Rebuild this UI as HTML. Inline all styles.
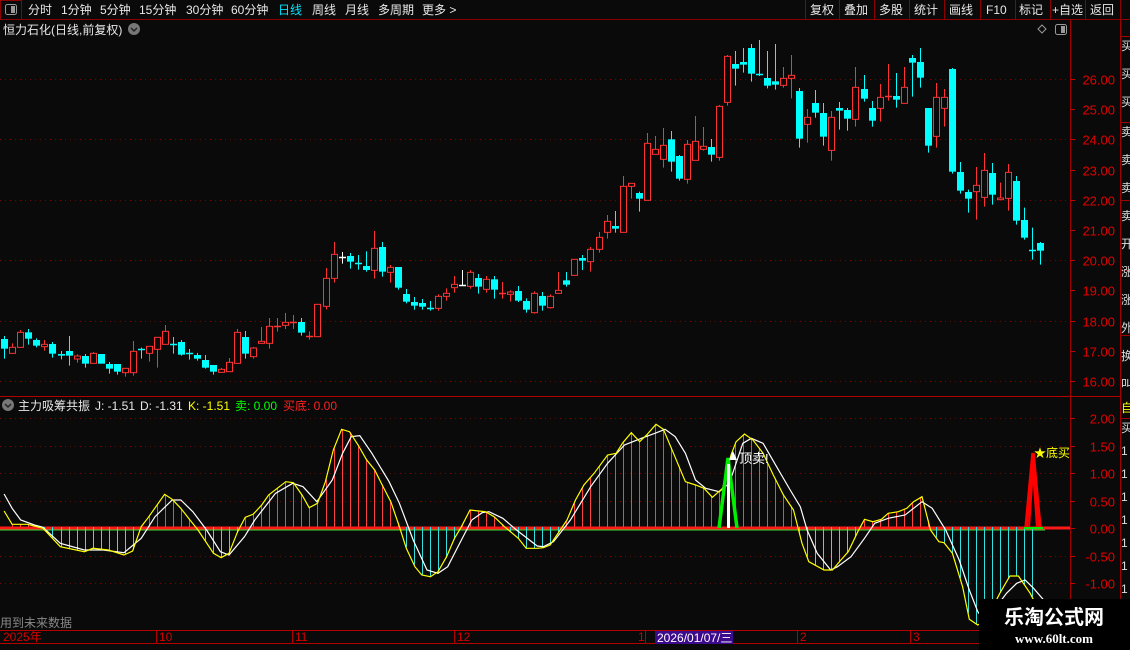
<!DOCTYPE html>
<html><head><meta charset="utf-8"><style>
*{margin:0;padding:0}
body{width:1130px;height:650px;background:#0a0a0a;overflow:hidden;position:relative;font-family:"Liberation Sans","Noto Sans CJK SC",sans-serif;color:#ddd}
</style></head><body>
<svg id="s" width="1130" height="650" style="position:absolute;left:0;top:0" xmlns="http://www.w3.org/2000/svg" font-family="Liberation Sans, Noto Sans CJK SC, sans-serif">
<rect x="0" y="0" width="1130" height="19" fill="#0a0a0a"/>
<line x1="0" y1="19.5" x2="1130" y2="19.5" stroke="#8b0000"/>
<rect x="0.5" y="0.5" width="21" height="19" fill="none" stroke="#8b0000"/>
<rect x="5.5" y="4.5" width="11" height="10" rx="2" fill="none" stroke="#999"/>
<rect x="11" y="6" width="4" height="7" fill="#999"/>
<g stroke="#8b0000">
<line x1="805.5" y1="0" x2="805.5" y2="19"/><line x1="839.5" y1="0" x2="839.5" y2="19"/><line x1="874.5" y1="0" x2="874.5" y2="19"/><line x1="909.5" y1="0" x2="909.5" y2="19"/><line x1="944.5" y1="0" x2="944.5" y2="19"/><line x1="980.5" y1="0" x2="980.5" y2="19"/><line x1="1015.5" y1="0" x2="1015.5" y2="19"/><line x1="1050.5" y1="0" x2="1050.5" y2="19"/><line x1="1085.5" y1="0" x2="1085.5" y2="19"/><line x1="1120.5" y1="0" x2="1120.5" y2="19"/>
</g>
<g font-size="12" fill="#e8e8e8">
<text x="28" y="14">分时</text><text x="61" y="14">1分钟</text><text x="100" y="14">5分钟</text><text x="139" y="14">15分钟</text><text x="186" y="14">30分钟</text><text x="231" y="14">60分钟</text><text x="278" y="14" fill="#00e5ff">日线</text><text x="312" y="14">周线</text><text x="345" y="14">月线</text><text x="378" y="14">多周期</text><text x="422" y="14">更多 &gt;</text>
<text x="810" y="14">复权</text><text x="844" y="14">叠加</text><text x="879" y="14">多股</text><text x="914" y="14">统计</text><text x="949" y="14">画线</text><text x="986" y="14">F10</text><text x="1019" y="14">标记</text><text x="1052" y="14">+自选</text><text x="1090" y="14">返回</text>
</g>
<line x1="1070.5" y1="20" x2="1070.5" y2="630" stroke="#a00000"/>
<line x1="1120.5" y1="20" x2="1120.5" y2="630" stroke="#a00000"/>
<line x1="0" y1="396.5" x2="1120" y2="396.5" stroke="#b00000"/>
<line x1="0" y1="630.5" x2="980" y2="630.5" stroke="#b00000"/>
<line x1="0" y1="643.5" x2="980" y2="643.5" stroke="#b00000"/>
<text x="3" y="34" font-size="12" fill="#e8e8e8">恒力石化(日线,前复权)</text>
<circle cx="134" cy="29" r="6" fill="#777"/><path d="M131 28l3 3 3-3" stroke="#222" stroke-width="1.5" fill="none"/>
<path d="M1042 25l4 4-4 4-4-4z" fill="none" stroke="#999"/>
<rect x="1055.5" y="24.5" width="11" height="10" rx="2" fill="none" stroke="#999"/><rect x="1061" y="26" width="4" height="7" fill="#999"/>
<g id="grid" stroke="#7a0000" stroke-dasharray="1 4"></g>
<g id="axis" font-size="13" fill="#e00000" text-anchor="end"></g>
<g id="cand"></g>
<g id="ind"></g>
<circle cx="8" cy="405" r="6" fill="#777"/><path d="M5 404l3 3 3-3" stroke="#222" stroke-width="1.5" fill="none"/>
<g font-size="12">
<text x="18" y="410" fill="#e8e8e8">主力吸筹共振</text>
<text x="95" y="410" fill="#e8e8e8">J: -1.51</text>
<text x="140" y="410" fill="#e8e8e8">D: -1.31</text>
<text x="188" y="410" fill="#ffff00">K: -1.51</text>
<text x="235" y="410" fill="#00ff00">卖: 0.00</text>
<text x="283" y="410" fill="#ff2020">买底: 0.00</text>
</g>
<polyline points="719,528 728,458 737,528" fill="none" stroke="#00ee00" stroke-width="3.5"/>
<rect x="727" y="464" width="3" height="64" fill="#fff"/>
<path d="M733 451l4 9h-8z" fill="#fff"/>
<text x="739" y="463" font-size="13" fill="#fff">顶卖!</text>
<polyline points="1026,528 1033,453 1040,528" fill="none" stroke="#ff0000" stroke-width="3.5"/>
<polyline points="1029,528 1033,470 1037,528" fill="none" stroke="#ff0000" stroke-width="2"/>
<line x1="1024" y1="528" x2="1043" y2="528" stroke="#00ee00" stroke-width="2"/>
<text x="1034" y="457" font-size="12" fill="#ffff00">★底买</text>
<g font-size="12" fill="#d00000">
<text x="3" y="641">2025年</text><text x="159" y="641">10</text><text x="295" y="641">11</text><text x="457" y="641">12</text><text x="638" y="641">1</text><text x="800" y="641">2</text><text x="913" y="641">3</text>
</g>
<g stroke="#b00000"><line x1="156.5" y1="631" x2="156.5" y2="643"/><line x1="292.5" y1="631" x2="292.5" y2="643"/><line x1="454.5" y1="631" x2="454.5" y2="643"/><line x1="645.5" y1="631" x2="645.5" y2="643"/><line x1="797.5" y1="631" x2="797.5" y2="643"/><line x1="910.5" y1="631" x2="910.5" y2="643"/></g>
<rect x="655" y="631" width="78" height="13" fill="#3c0a8c"/>
<text x="657" y="642" font-size="12" fill="#fff">2026/01/07/三</text>
<text x="0" y="627" font-size="12" fill="#888">用到未来数据</text>
<rect x="979" y="599" width="151" height="51" fill="#000"/>
<text x="1054" y="624" font-size="20" font-weight="bold" fill="#fff" text-anchor="middle">乐淘公式网</text>
<text x="1054" y="643" font-size="13" font-weight="bold" fill="#fff" text-anchor="middle" font-family="Liberation Serif, serif">www.60lt.com</text>
<g stroke="#a00000" fill="none"><line x1="1120" y1="36.5" x2="1130" y2="36.5"/><line x1="1120" y1="122.5" x2="1130" y2="122.5"/><line x1="1120" y1="200.5" x2="1130" y2="200.5"/><line x1="1120" y1="270.5" x2="1130" y2="270.5"/><line x1="1120" y1="335.5" x2="1130" y2="335.5"/><line x1="1120" y1="418.5" x2="1130" y2="418.5"/></g>
<g font-size="12" fill="#ddd"><text x="1121" y="50">买</text><text x="1121" y="78">买</text><text x="1121" y="106">买</text><text x="1121" y="136">卖</text><text x="1121" y="164">卖</text><text x="1121" y="192">卖</text><text x="1121" y="220">卖</text><text x="1121" y="248">开</text><text x="1121" y="276">涨</text><text x="1121" y="304">涨</text><text x="1121" y="332">外</text><text x="1121" y="360">换</text><text x="1121" y="388">叫</text>
<text x="1121" y="412" fill="#ffff00">自</text><text x="1121" y="432">买</text><text x="1121" y="455">1</text><text x="1121" y="478">1</text><text x="1121" y="501">1</text><text x="1121" y="524">1</text><text x="1121" y="547">1</text><text x="1121" y="570">1</text><text x="1121" y="593">1</text></g>
</svg>
<script>
var NS="http://www.w3.org/2000/svg";
function el(p,t,a){var e=document.createElementNS(NS,t);for(var k in a)e.setAttribute(k,a[k]);document.getElementById(p).appendChild(e);return e;}
var py=function(p){return 79+(26-p)*30.2;};
for(var p=16;p<=26;p++){var y=Math.round(py(p))+0.5;
 if(p%2==0)el("grid","line",{x1:0,y1:y,x2:1070,y2:y});
 el("axis","line",{x1:1070,y1:y,x2:1075,y2:y,stroke:"#c00000"});
 var t=el("axis","text",{x:1115,y:y+5});t.textContent=p.toFixed(2);}
var iy=function(v){return 528-v*55;};
[2,1.5,1,0.5,0,-0.5,-1].forEach(function(v){var y=Math.round(iy(v))+0.5;
 if(v!=0)el("grid","line",{x1:0,y1:y,x2:1070,y2:y});
 el("axis","line",{x1:1070,y1:y,x2:1075,y2:y,stroke:"#c00000"});
 var t=el("axis","text",{x:1115,y:y+5});t.textContent=v.toFixed(2);});
var A=[["c",357,386,348,416],["r",382,400,370,400],["r",337,382,330,382],["c",337,356,327,374],["c",360,377,355,382],["r",373,380,360,392],["c",372,401,366,413],["c",402,407,393,418],["c",393,407,348,437],["r",408,417,403,428],["c",408,431,402,443],["r",400,430,396,430],["c",402,431,402,431],["c",432,446,426,461],["c",432,455,432,464],["r",445,458,445,470],["r",394,458,363,467],["c",386,386,383,416],["r",379,400,379,425],["r",352,388,352,443],["r",334,373,315,373],["c",372,372,351,401],["c",366,404,360,407],["c",399,399,387,419],["c",405,416,399,422],["c",420,443,405,446],["c",435,455,435,464],["r",448,457,444,457],["r",427,455,414,455],["r",337,430,327,430],["c",351,401,333,416],["r",384,410,381,416],["r",364,370,321,370],["r",319,370,294,386],["r",319,319,294,335],["r",307,316,279,327],["r",307,307,285,327],["c",306,338,294,347],["r",349,353,334,359],["r",253,350,253,350],["r",175,259,144,268],["r",103,175,66,188],["w",112,112,96,131],["c",108,125,99,146],["c",130,130,105,149],["c",138,150,94,155],["r",85,151,33,176],["c",81,155,66,170],["r",142,157,135,188],["c",141,203,141,209],["c",222,245,207,250],["c",246,257,231,269],["c",249,260,237,269],["c",265,265,243,272],["r",229,265,223,272],["r",220,229,205,242],["r",193,203,168,218],["w",194,194,150,198],["r",157,199,150,206],["c",174,200,162,221],["r",178,208,168,218],["c",178,209,168,236],["r",219,219,186,236],["r",216,223,211,245],["c",213,242,198,246],["c",243,269,235,278],["r",220,278,214,281]];
var B=[["c",783,812,771,827],["r",784,818,778,821],["r",766,775,711,775],["c",736,749,711,755],["r",673,721,673,721],["c",669,677,660,705],["r",643,680,636,710],["r",607,643,591,653],["r",559,592,540,611],["c",573,581,528,593],["r",454,592,423,592],["r",445,454,445,491],["c",474,491,470,530],["r",325,496,294,496],["r",343,358,303,358],["r",331,373,279,398],["c",313,380,288,410],["c",363,431,360,437],["r",328,433,315,446],["r",319,376,243,376],["r",334,343,276,347],["c",336,359,312,380],["r",214,367,210,377],["r",64,202,60,212],["c",87,101,48,152],["c",81,89,39,113],["c",39,116,27,140],["c",118,118,15,123],["c",129,152,48,160],["c",139,149,27,164],["r",130,151,96,158],["r",121,130,60,190],["c",168,311,159,338],["r",247,268,222,323],["c",204,233,165,248],["c",234,305,204,332],["r",247,346,228,377],["c",219,227,201,284],["c",225,251,219,287],["r",157,253,96,275],["c",162,191,120,200],["c",219,257,198,275],["r",187,220,147,260],["r",184,184,87,197],["c",183,194,114,218],["r",157,205,96,205],["c",69,83,60,185],["c",81,128,39,158],["c",219,332,219,353],["r",187,304,144,338],["r",187,220,162,275],["c",102,410,99,416],["c",411,467,381,476],["c",471,491,464,533],["r",451,470,396,554],["r",406,487,354,515],["c",414,479,384,509],["r",489,494,443,494],["r",412,490,387,527],["c",438,557,423,569],["c",555,608,518,614],["c",644,644,578,674],["c",624,647,621,689]];
var C=[];A.forEach(function(a){C.push([a[0],220+a[1]/3,220+a[2]/3,220+a[3]/3,220+a[4]/3]);});
B.forEach(function(a){C.push([a[0],35+a[1]/3,35+a[2]/3,35+a[3]/3,35+a[4]/3]);});
var XS=[];
C.forEach(function(c,i){var x=Math.round(4.3+8.03*i);XS.push(x);
 var col=c[0]=="r"?"#ff3232":(c[0]=="w"?"#ffffff":"#00ffff");
 el("cand","line",{x1:x+0.5,y1:c[3],x2:x+0.5,y2:c[4],stroke:col});
 var h=c[2]-c[1];
 if(h<1.5){el("cand","line",{x1:x-3,y1:Math.round(c[1])+0.5,x2:x+4,y2:Math.round(c[1])+0.5,stroke:col,"stroke-width":1.5});}
 else if(c[0]=="r"){el("cand","rect",{x:x-2.5,y:c[1],width:6,height:h,fill:"#0a0a0a",stroke:col});}
 else{el("cand","rect",{x:x-3,y:c[1],width:7,height:h,fill:col});}
});
function conv(arr,off,f){return arr.map(function(p){return [off+p[0]/f,420+p[1]/3];});}
var Y1=conv([[12,273],[35,313],[80,313],[125,325],[175,380],[245,395],[270,385],[315,390],[360,405],[385,393],[410,320],[430,293],[478,223],[500,238],[525,265],[550,298],[575,330],[620,400],[642,413],[665,400],[690,335],[712,292],[735,283],[760,255],[780,225],[830,185],[852,188],[877,225],[898,263],[922,250],[945,185],[968,90],[992,28],[1015,35],[1040,75],[1065,120],[1088,150],[1110,195],[1135,245],[1160,320],[1180,385],[1205,440],[1225,465],[1250,470],[1272,455],[1297,410],[1320,355],[1340,320],[1365,270],[1390,273],[1410,275],[1435,290],[1465,320],[1505,355],[1528,385],[1560,385]],0,2.904);
var Y2=conv([[10,383],[30,375],[80,300],[105,240],[130,195],[160,160],[200,105],[225,100],[245,68],[270,38],[295,65],[318,42],[343,13],[365,28],[395,100],[430,185],[460,195],[485,205],[510,232],[540,205],[565,105],[580,65],[605,42],[630,60],[660,100],[690,165],[720,225],[750,270],[765,330],[775,370],[795,425],[840,450],[865,450],[890,420],[912,395],[940,335],[960,298],[985,305],[1010,298],[1030,280],[1060,275],[1085,265],[1105,245],[1130,230],[1155,330],[1180,365],[1195,368],[1220,400],[1250,500],[1270,598],[1295,615],[1320,600],[1340,560],[1360,520],[1390,468],[1415,468],[1450,520],[1470,560]],540,2.958);
var W1=conv([[12,222],[35,265],[60,300],[100,315],[125,322],[175,370],[245,390],[300,390],[360,398],[410,355],[450,290],[500,240],[525,240],[560,275],[600,330],[640,395],[665,405],[710,350],[740,300],[800,220],[850,190],[880,200],[920,245],[965,180],[995,100],[1020,50],[1045,47],[1080,100],[1130,185],[1160,250],[1200,360],[1240,450],[1272,460],[1300,440],[1340,360],[1370,300],[1400,278],[1420,275],[1460,295],[1500,330],[1560,378]],0,2.904);
var W2=conv([[10,380],[40,365],[90,300],[150,200],[200,130],[250,75],[300,55],[340,40],[370,28],[400,50],[430,100],[460,180],[490,205],[530,215],[560,190],[600,70],[625,55],[660,70],[700,140],[740,210],[770,260],[790,330],[820,400],[860,450],[880,440],[920,410],[960,355],[990,310],[1030,295],[1080,285],[1130,245],[1160,265],[1200,330],[1240,420],[1270,510],[1295,575],[1320,610],[1350,560],[1380,520],[1410,490],[1435,480],[1460,505],[1490,540]],540,2.958);
var Y=Y1.concat(Y2);
function at(x){for(var i=0;i<Y.length-1;i++){if(x>=Y[i][0]&&x<=Y[i+1][0]){var t=(x-Y[i][0])/((Y[i+1][0]-Y[i][0])||1);return Y[i][1]+t*(Y[i+1][1]-Y[i][1]);}}return 528;}
el("ind","line",{x1:0,y1:528,x2:1070,y2:528,stroke:"#ff1a1a","stroke-width":3});
el("ind","line",{x1:0,y1:530,x2:1045,y2:530,stroke:"#33dd33","stroke-width":1});
XS.forEach(function(x){var y=at(x);if(Math.abs(y-528)<1)return;
 el("ind","line",{x1:x+0.5,y1:527,x2:x+0.5,y2:y,stroke:y<528?"#ff4040":"#33e0e0"});});
function pl(pts,col){el("ind","polyline",{points:pts.map(function(p){return p[0].toFixed(1)+","+p[1].toFixed(1);}).join(" "),fill:"none",stroke:col,"stroke-width":1.2});}
pl(W1.concat(W2),"#ffffff");pl(Y,"#ffff00");
</script>
</body></html>
